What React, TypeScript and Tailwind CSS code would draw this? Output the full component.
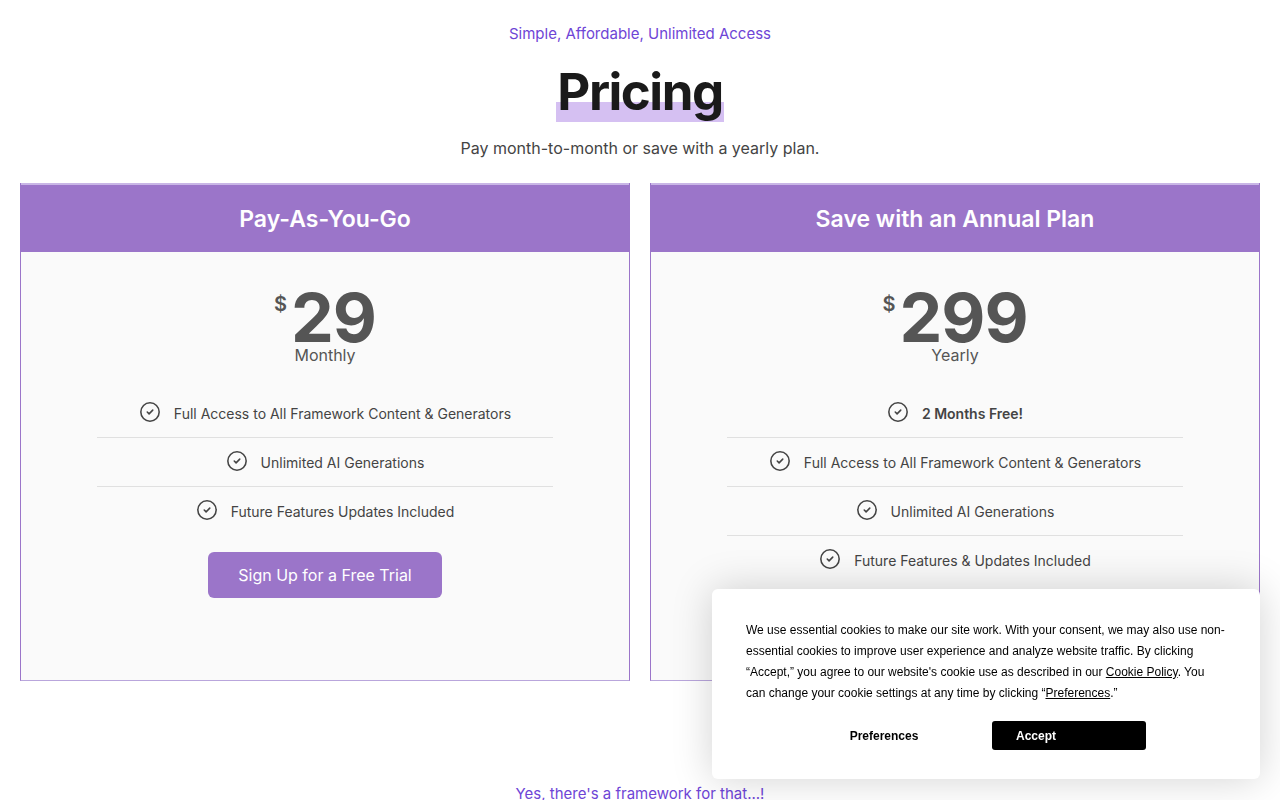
import { CircleCheck } from 'lucide-react';

interface Plan {
  title: string;
  price: string;
  period: string;
  features: { text: string; bold?: boolean }[];
}

const plans: Plan[] = [
  {
    title: 'Pay-As-You-Go',
    price: '29',
    period: 'Monthly',
    features: [
      { text: 'Full Access to All Framework Content & Generators' },
      { text: 'Unlimited AI Generations' },
      { text: 'Future Features Updates Included' },
    ],
  },
  {
    title: 'Save with an Annual Plan',
    price: '299',
    period: 'Yearly',
    features: [
      { text: '2 Months Free!', bold: true },
      { text: 'Full Access to All Framework Content & Generators' },
      { text: 'Unlimited AI Generations' },
      { text: 'Future Features & Updates Included' },
    ],
  },
];

function PlanCard({ plan }: { plan: Plan }) {
  return (
    <div className="flex flex-col border-x border-b border-[#9b75c9] border-b-[#b9a6dc] bg-[#fafafa]">
      <div className="flex h-[69px] items-center justify-center border-t-2 border-[#c9b6e6] bg-[#9b75c9] pt-[2px]">
        <h2 className="text-[23px] font-semibold text-white">{plan.title}</h2>
      </div>
      <div className="flex flex-col items-center pt-[38px] pb-[33px]">
        <div className="flex flex-col items-center text-[#555]">
          <div className="flex items-start">
            <span className="mt-[4px] mr-[4px] text-[20px] font-semibold leading-none">$</span>
            <span className="text-[68px] font-bold leading-[55px] tracking-[-1px]">{plan.price}</span>
          </div>
          <span className="text-[16px] leading-[20px]">{plan.period}</span>
        </div>
        <ul className="mt-[24px] w-[456px] divide-y divide-[#e0e0e0]">
          {plan.features.map((f) => (
            <li key={f.text} className="flex h-[49px] items-center justify-center gap-[13px] text-[14px] text-[#444]">
              <CircleCheck className="mb-[3px] h-[22px] w-[22px]" strokeWidth={1.7} />
              <span className={f.bold ? 'font-semibold' : ''}>{f.text}</span>
            </li>
          ))}
        </ul>
        <button className="mt-[16px] h-[46px] w-[234px] rounded-md bg-[#9b75c9] text-[16px] text-white">
          Sign Up for a Free Trial
        </button>
      </div>
    </div>
  );
}

function CookieBanner() {
  return (
    <div className="fixed right-[20px] bottom-[21px] w-[548px] rounded-md bg-white px-[34px] pt-[31px] pb-[29px] shadow-[0_0_40px_rgba(0,0,0,0.18)] font-['Liberation_Sans',Arial,sans-serif]">
      <p className="text-[12px] leading-[21px] text-black">
        We use essential cookies to make our site work. With your consent, we may also use non-essential cookies to
        improve user experience and analyze website traffic. By clicking “Accept,” you agree to our website's cookie
        use as described in our <span className="underline">Cookie Policy</span>. You can change your cookie settings
        at any time by clicking “<span className="underline">Preferences</span>.”
      </p>
      <div className="mt-[17px] flex items-center">
        <button className="ml-[30px] w-[216px] text-[12px] font-bold text-black">Preferences</button>
        <button className="h-[29px] w-[154px] rounded-[3px] bg-black pl-[24px] text-left text-[12px] font-bold text-white">
          Accept
        </button>
      </div>
    </div>
  );
}

export default function App() {
  return (
    <div className="min-h-screen bg-white font-['Inter',sans-serif]">
      <div className="flex flex-col items-center pt-[24px]">
        <p className="text-[15px] leading-[20px] text-[#6e45d6]">Simple, Affordable, Unlimited Access</p>
        <h1 className="relative mt-[18px] text-[51px] font-bold leading-[60px] tracking-[-1.5px] text-[#1a1a1a]">
          <span className="absolute left-[-1px] right-[-1px] top-[40px] h-[20px] bg-[#d5c0f2]" />
          <span className="relative">Pricing</span>
        </h1>
        <p className="mt-[15px] text-[16px] leading-[22px] text-[#444]">Pay month-to-month or save with a yearly plan.</p>
      </div>
      <div className="mt-[24px] grid grid-cols-2 gap-[20px] px-[20px]">
        {plans.map((p) => (
          <PlanCard key={p.title} plan={p} />
        ))}
      </div>
      <div className="mt-[102px] pb-4 text-center text-[15px] text-[#6e45d6]">Yes, there's a framework for that...!</div>
      <CookieBanner />
    </div>
  );
}
